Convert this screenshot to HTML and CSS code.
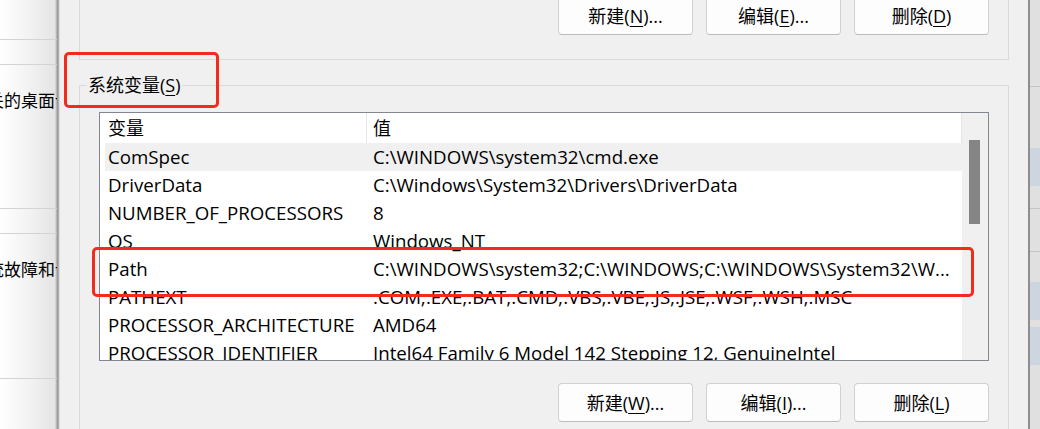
FILE: index.html
```html
<!DOCTYPE html>
<html lang="zh-CN">
<head>
    <meta charset="UTF-8">
    <meta name="viewport" content="width=device-width, initial-scale=1.0">
    <title>环境变量</title>
    <link rel="stylesheet" href="styles.css">
</head>
<body>
    <div class="screen">
        <!-- window behind, left side -->
        <div class="behind-left">
            <div class="strip-row" style="height: 40px"></div>
            <div class="strip-row" style="height: 25px"></div>
            <div class="strip-row strip-text-row" style="height: 144px">
                <div class="strip-text"><span>相关的桌面设置</span></div>
            </div>
            <div class="strip-row" style="height: 25px"></div>
            <div class="strip-row strip-text-row" style="height: 145px">
                <div class="strip-text"><span>系统故障和调试信息</span></div>
            </div>
            <div class="strip-row last"></div>
        </div>

        <div class="dialog">
            <div class="group user-vars">
                <button class="btn">新建(<u>N</u>)...</button>
                <button class="btn">编辑(<u>E</u>)...</button>
                <button class="btn">删除(<u>D</u>)</button>
            </div>

            <fieldset class="group sys-vars">
                <legend>系统变量(<u>S</u>)</legend>

                <div class="listview">
                    <div class="lv-body">
                        <div class="lv-header">
                            <div class="col-name">变量</div>
                            <div class="col-value">值</div>
                        </div>
                        <div class="lv-row selected">
                            <div class="col-name">ComSpec</div>
                            <div class="col-value">C:\WINDOWS\system32\cmd.exe</div>
                        </div>
                        <div class="lv-row">
                            <div class="col-name">DriverData</div>
                            <div class="col-value">C:\Windows\System32\Drivers\DriverData</div>
                        </div>
                        <div class="lv-row">
                            <div class="col-name">NUMBER_OF_PROCESSORS</div>
                            <div class="col-value">8</div>
                        </div>
                        <div class="lv-row">
                            <div class="col-name">OS</div>
                            <div class="col-value">Windows_NT</div>
                        </div>
                        <div class="lv-row">
                            <div class="col-name">Path</div>
                            <div class="col-value">C:\WINDOWS\system32;C:\WINDOWS;C:\WINDOWS\System32\W...</div>
                        </div>
                        <div class="lv-row">
                            <div class="col-name">PATHEXT</div>
                            <div class="col-value">.COM;.EXE;.BAT;.CMD;.VBS;.VBE;.JS;.JSE;.WSF;.WSH;.MSC</div>
                        </div>
                        <div class="lv-row">
                            <div class="col-name">PROCESSOR_ARCHITECTURE</div>
                            <div class="col-value">AMD64</div>
                        </div>
                        <div class="lv-row">
                            <div class="col-name">PROCESSOR_IDENTIFIER</div>
                            <div class="col-value">Intel64 Family 6 Model 142 Stepping 12, GenuineIntel</div>
                        </div>
                    </div>
                    <div class="scrollbar">
                        <div class="thumb"></div>
                    </div>
                </div>

                <div class="btn-row">
                    <button class="btn">新建(<u>W</u>)...</button>
                    <button class="btn">编辑(<u>I</u>)...</button>
                    <button class="btn">删除(<u>L</u>)</button>
                </div>
            </fieldset>
        </div>

        <!-- window behind, right side -->
        <div class="behind-right">
            <div class="rs" style="height: 86px"></div>
            <div class="rs line"></div>
            <div class="rs" style="height: 61px"></div>
            <div class="rs blue" style="height: 38px"></div>
            <div class="rs" style="height: 22px"></div>
            <div class="rs line"></div>
            <div class="rs" style="height: 42px"></div>
            <div class="rs line"></div>
            <div class="rs" style="height: 30px"></div>
            <div class="rs blue" style="height: 38px"></div>
            <div class="rs" style="height: 7px"></div>
            <div class="rs blue" style="height: 38px"></div>
        </div>

        <!-- red annotation boxes -->
        <div class="mark mark-label"></div>
        <div class="mark mark-path"></div>
    </div>
</body>
</html>
```

FILE: styles.css
```css
* {
    box-sizing: border-box;
}

html, body {
    margin: 0;
    padding: 0;
    overflow: hidden;
    background: #f0f0f0;
}

.screen {
    position: relative;
    display: flex;
    width: 1040px;
    height: 429px;
    overflow: hidden;
    font-family: "Open Sans", "Noto Sans CJK SC", sans-serif;
    font-size: 18px;
    color: #000;
}

u {
    text-decoration: underline;
    text-decoration-thickness: 1px;
    text-underline-offset: 3px;
}

/* background window on the left */
.behind-left {
    width: 60px;
    flex-shrink: 0;
    background: linear-gradient(to right, #ffffff 0px, #f2f2f2 30px, #e4e4e4 55px, #a8a8a8 57px, #8e8e8e 58px, #cfcfcf 59px, #ececec 60px);
}

.strip-row {
    width: 57px;
    border-bottom: 1px solid #d3d3d3;
}

.strip-row.last {
    border-bottom: none;
}

.strip-text-row {
    padding-top: 23px;
}

.strip-text {
    width: 57px;
    overflow: hidden;
    white-space: nowrap;
    font-family: "Noto Sans CJK SC", sans-serif;
    font-size: 17px;
    line-height: 24px;
}

.strip-text span {
    display: inline-block;
    margin-left: -30px;
}

/* dialog */
.dialog {
    flex: 1;
    min-width: 0;
    background: #f0f0f0;
}

.group {
    border: 1px solid #dadada;
}

.user-vars {
    margin: -20px 19px 0;
    padding: 15px 19px 24px 0;
    display: flex;
    justify-content: flex-end;
    gap: 13px;
}

.sys-vars {
    margin: 13px 19px 0;
    padding: 15px 19px 20px;
    min-width: 0;
}

.sys-vars legend {
    margin-left: -12px;
    padding: 0 1px;
    line-height: 24px;
}

.btn {
    width: 135px;
    height: 39px;
    padding: 0;
    border: 1px solid #d0d0d0;
    border-bottom-color: #bcbcbc;
    border-radius: 4px;
    background: #fdfdfd;
    font: inherit;
    line-height: 36px;
    color: #000;
}

.btn-row {
    display: flex;
    justify-content: flex-end;
    gap: 13px;
    margin-top: 22px;
}

/* list view */
.listview {
    display: flex;
    height: 249px;
    border: 1px solid #828790;
    background: #fff;
}

.lv-body {
    flex: 1;
    min-width: 0;
    padding-left: 5px;
    overflow: hidden;
    font-size: 18.7px;
}

.lv-header {
    display: flex;
    height: 30px;
    line-height: 30px;
    font-size: 18px;
}

.lv-row {
    display: flex;
    height: 28px;
    line-height: 28px;
}

.lv-row.selected {
    background: #f0f0f0;
}

.col-name {
    width: 262px;
    flex-shrink: 0;
    padding-left: 3px;
    white-space: nowrap;
    overflow: hidden;
}

.col-value {
    flex: 1;
    min-width: 0;
    padding-left: 6px;
    white-space: nowrap;
    overflow: hidden;
}

.lv-header .col-name,
.lv-header .col-value {
    border-right: 1px solid #e5e5e5;
}

.scrollbar {
    width: 26px;
    flex-shrink: 0;
    background: #f0f0f0;
}

.thumb {
    width: 11px;
    height: 84px;
    margin: 27px 0 0 7px;
    background: #858585;
}

/* background window on the right */
.behind-right {
    width: 12px;
    flex-shrink: 0;
    border-left: 2px solid #8e8e8e;
    background: #e0e0e0;
}

.rs.line {
    height: 1px;
    background: #c4c4c4;
}

.rs.blue {
    background: #cdd6e0;
}

/* red annotation boxes */
.mark {
    position: absolute;
    border: 3px solid #f52a1f;
    border-radius: 5px;
}

.mark-label {
    left: 64px;
    top: 52px;
    width: 155px;
    height: 56px;
}

.mark-path {
    left: 92px;
    top: 247px;
    width: 882px;
    height: 50px;
}
```
